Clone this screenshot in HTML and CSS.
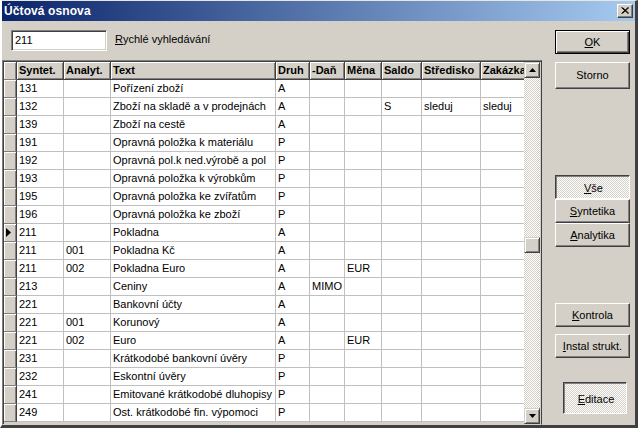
FILE: index.html
```html
<!DOCTYPE html>
<html lang="cs">
<head>
<meta charset="utf-8">
<title>Účtová osnova</title>
<link rel="stylesheet" href="styles.css">
</head>
<body>
<div class="window">
  <div class="titlebar">
    <span class="title">Účtová osnova</span>
    <span class="close"><svg width="8" height="7" viewBox="0 0 8 7"><path d="M0.5 0.5 L7 6.5 M1.5 0.5 L8 6.5 M7 0.5 L0.5 6.5 M8 0.5 L1.5 6.5" stroke="#000" stroke-width="1" fill="none"/></svg></span>
  </div>
  <div class="client">
    <div class="leftcol">
      <div class="search">
        <div class="input">211</div>
        <div class="label"><u>R</u>ychlé vyhledávání</div>
      </div>
      <div class="grid">
        <div class="viewport">
          <table>
            <colgroup>
              <col class="c-ind"><col class="c-syn"><col class="c-ana"><col class="c-txt"><col class="c-dru"><col class="c-dan"><col class="c-men"><col class="c-sal"><col class="c-str"><col class="c-zak">
            </colgroup>
            <thead>
              <tr><th class="ind"></th><th>Syntet.</th><th>Analyt.</th><th>Text</th><th>Druh</th><th>-Daň</th><th>Měna</th><th>Saldo</th><th>Středisko</th><th>Zakázka</th></tr>
            </thead>
            <tbody>
              <tr><td class="ind"></td><td>131</td><td></td><td>Pořízení zboží</td><td>A</td><td></td><td></td><td></td><td></td><td></td></tr>
              <tr><td class="ind"></td><td>132</td><td></td><td>Zboží na skladě a v prodejnách</td><td>A</td><td></td><td></td><td>S</td><td>sleduj</td><td>sleduj</td></tr>
              <tr><td class="ind"></td><td>139</td><td></td><td>Zboží na cestě</td><td>A</td><td></td><td></td><td></td><td></td><td></td></tr>
              <tr><td class="ind"></td><td>191</td><td></td><td>Opravná položka k materiálu</td><td>P</td><td></td><td></td><td></td><td></td><td></td></tr>
              <tr><td class="ind"></td><td>192</td><td></td><td>Opravná pol.k ned.výrobě a pol</td><td>P</td><td></td><td></td><td></td><td></td><td></td></tr>
              <tr><td class="ind"></td><td>193</td><td></td><td>Opravná položka k výrobkům</td><td>P</td><td></td><td></td><td></td><td></td><td></td></tr>
              <tr><td class="ind"></td><td>195</td><td></td><td>Opravná položka ke zvířatům</td><td>P</td><td></td><td></td><td></td><td></td><td></td></tr>
              <tr><td class="ind"></td><td>196</td><td></td><td>Opravná položka ke zboží</td><td>P</td><td></td><td></td><td></td><td></td><td></td></tr>
              <tr><td class="ind cur"><svg width="5" height="9" viewBox="0 0 5 9"><path d="M0 0 L5 4.5 L0 9 Z" fill="#000"/></svg></td><td>211</td><td></td><td>Pokladna</td><td>A</td><td></td><td></td><td></td><td></td><td></td></tr>
              <tr><td class="ind"></td><td>211</td><td>001</td><td>Pokladna Kč</td><td>A</td><td></td><td></td><td></td><td></td><td></td></tr>
              <tr><td class="ind"></td><td>211</td><td>002</td><td>Pokladna Euro</td><td>A</td><td></td><td>EUR</td><td></td><td></td><td></td></tr>
              <tr><td class="ind"></td><td>213</td><td></td><td>Ceniny</td><td>A</td><td>MIMO</td><td></td><td></td><td></td><td></td></tr>
              <tr><td class="ind"></td><td>221</td><td></td><td>Bankovní účty</td><td>A</td><td></td><td></td><td></td><td></td><td></td></tr>
              <tr><td class="ind"></td><td>221</td><td>001</td><td>Korunový</td><td>A</td><td></td><td></td><td></td><td></td><td></td></tr>
              <tr><td class="ind"></td><td>221</td><td>002</td><td>Euro</td><td>A</td><td></td><td>EUR</td><td></td><td></td><td></td></tr>
              <tr><td class="ind"></td><td>231</td><td></td><td>Krátkodobé bankovní úvěry</td><td>P</td><td></td><td></td><td></td><td></td><td></td></tr>
              <tr><td class="ind"></td><td>232</td><td></td><td>Eskontní úvěry</td><td>P</td><td></td><td></td><td></td><td></td><td></td></tr>
              <tr><td class="ind"></td><td>241</td><td></td><td>Emitované krátkodobé dluhopisy</td><td>P</td><td></td><td></td><td></td><td></td><td></td></tr>
              <tr><td class="ind"></td><td>249</td><td></td><td>Ost. krátkodobé fin. výpomoci</td><td>P</td><td></td><td></td><td></td><td></td><td></td></tr>
            </tbody>
          </table>
        </div>
        <div class="vscroll">
          <div class="sbtn"><svg width="7" height="4" viewBox="0 0 7 4"><path d="M3.5 0 L7 4 L0 4 Z" fill="#000"/></svg></div>
          <div class="track">
            <div class="track-top"></div>
            <div class="thumb"></div>
            <div class="track-bot"></div>
          </div>
          <div class="sbtn"><svg width="7" height="4" viewBox="0 0 7 4"><path d="M0 0 L7 0 L3.5 4 Z" fill="#000"/></svg></div>
        </div>
      </div>
    </div>
    <div class="rightcol">
      <div class="btn default b-ok"><u>O</u>K</div>
      <div class="btn b-storno">Storno</div>
      <div class="toggles">
        <div class="btn pressed b-tog"><u>V</u>še</div>
        <div class="btn b-tog"><u>S</u>yntetika</div>
        <div class="btn b-tog"><u>A</u>nalytika</div>
      </div>
      <div class="btn b-kontrola"><u>K</u>ontrola</div>
      <div class="btn b-instal"><u>I</u>nstal strukt.</div>
      <div class="btn pressed b-editace"><u>E</u>ditace</div>
    </div>
  </div>
</div>
</body>
</html>
```

FILE: styles.css
```css
* { box-sizing: border-box; }
html, body { margin: 0; padding: 0; }
body {
  width: 638px;
  height: 428px;
  overflow: hidden;
  background: #d4d0c8;
  font-family: "Liberation Sans", Arial, sans-serif;
  font-size: 11px;
  color: #000;
}
.window {
  width: 638px;
  height: 428px;
  border-style: solid;
  border-width: 1px 3px 3px 2px;
  border-color: #e8e6e0 #404040 #404040 #ffffff;
  display: flex;
  flex-direction: column;
}
.titlebar {
  height: 20px;
  flex: none;
  background: linear-gradient(to right, #0a246a, #a6caf0);
  display: flex;
  align-items: center;
  justify-content: space-between;
  padding: 0 2px 0 2px;
}
.title {
  color: #fff;
  font-weight: bold;
  font-size: 12px;
  letter-spacing: 0.1px;
}
.close {
  width: 16px;
  height: 14px;
  background: #d4d0c8;
  border: 1px solid;
  border-color: #fff #404040 #404040 #fff;
  box-shadow: inset -1px -1px 0 #808080;
  display: flex;
  align-items: center;
  justify-content: center;
  padding-bottom: 1px;
}
.close svg { display: block; }
.client {
  flex: 1;
  display: flex;
  min-height: 0;
}
.leftcol {
  width: 540px;
  display: flex;
  flex-direction: column;
  padding-top: 9px;
}
.search {
  display: flex;
  align-items: flex-start;
  padding-left: 9px;
  height: 21px;
}
.input {
  width: 96px;
  height: 21px;
  background: #fff;
  border: 1px solid;
  border-color: #808080 #fff #fff #808080;
  box-shadow: inset 1px 1px 0 #404040, inset -1px -1px 0 #d4d0c8;
  padding: 3px 0 0 3px;
  line-height: 13px;
}
.label {
  margin-left: 8px;
  padding-top: 3px;
  line-height: 13px;
}
.grid {
  margin-top: 9px;
  flex: 1;
  display: flex;
  border: 1px solid;
  border-color: #808080 #404040 #d4d0c8 #808080;
  box-shadow: inset 1px 1px 0 #404040;
  padding: 1px 1px 0 1px;
  min-height: 0;
}
.viewport {
  width: 520px;
  overflow: hidden;
  background: #d4d0c8;
}
table {
  border-collapse: separate;
  border-spacing: 0;
  table-layout: fixed;
  width: 537px;
}
.c-ind { width: 13px; }
.c-syn { width: 47px; }
.c-ana { width: 47px; }
.c-txt { width: 165px; }
.c-dru { width: 34px; }
.c-dan { width: 35px; }
.c-men { width: 37px; }
.c-sal { width: 40px; }
.c-str { width: 59px; }
.c-zak { width: 60px; }
th, td {
  height: 18px;
  padding: 0 0 0 2px;
  white-space: nowrap;
  overflow: hidden;
  text-align: left;
  line-height: 17px;
  vertical-align: middle;
}
th {
  background: #d4d0c8;
  font-weight: bold;
  border-right: 1px solid #404040;
  border-bottom: 1px solid #404040;
  box-shadow: inset 1px 1px 0 #fff, inset -1px -1px 0 #808080;
  padding-left: 2px;
}
td {
  background: #fff;
  border-right: 1px solid #c0c0c0;
  border-bottom: 1px solid #c0c0c0;
}
.ind, td.ind {
  background: #d4d0c8;
  border-right: 1px solid #404040;
  border-bottom: 1px solid #808080;
  box-shadow: inset 1px 1px 0 #fff, inset -1px 0 0 #808080;
  padding: 0;
}
td.cur svg {
  display: block;
  margin-left: 2px;
}
.vscroll {
  width: 16px;
  display: flex;
  flex-direction: column;
}
.sbtn {
  height: 16px;
  flex: none;
  background: #d4d0c8;
  border: 1px solid;
  border-color: #d4d0c8 #404040 #404040 #d4d0c8;
  box-shadow: inset 1px 1px 0 #fff, inset -1px -1px 0 #808080;
  display: flex;
  align-items: center;
  justify-content: center;
}
.sbtn svg { display: block; }
.track {
  flex: 1;
  display: flex;
  flex-direction: column;
  background: repeating-conic-gradient(#ffffff 0 25%, #d4d0c8 0 50%) 0 0 / 2px 2px;
}
.track-top { height: 159px; }
.thumb {
  height: 16px;
  background: #d4d0c8;
  border: 1px solid;
  border-color: #d4d0c8 #404040 #404040 #d4d0c8;
  box-shadow: inset 1px 1px 0 #fff, inset -1px -1px 0 #808080;
}
.track-bot { flex: 1; }
.rightcol {
  flex: 1;
  display: flex;
  flex-direction: column;
  padding-left: 13px;
  padding-top: 9px;
}
.btn {
  width: 75px;
  height: 24px;
  background: #d4d0c8;
  border: 1px solid;
  border-color: #fff #404040 #404040 #fff;
  box-shadow: inset -1px -1px 0 #808080;
  display: flex;
  align-items: center;
  justify-content: center;
  line-height: 13px;
}
.btn.default {
  border: 1px solid #000;
  box-shadow: inset 1px 1px 0 #fff, inset -1px -1px 0 #404040, inset -2px -2px 0 #808080;
}
.btn.pressed {
  border-color: #404040 #fff #fff #404040;
  box-shadow: inset 1px 1px 0 #808080;
  background: repeating-conic-gradient(#ffffff 0 25%, #d4d0c8 0 50%) 0 0 / 2px 2px;
  padding: 2px 0 0 2px;
}
.b-storno { margin-top: 8px; height: 27px; }
.toggles { margin-top: 86px; display: flex; flex-direction: column; }
.b-kontrola { margin-top: 56px; }
.b-instal { margin-top: 7px; }
.b-editace {
  margin-top: 24px;
  margin-left: 8px;
  width: 64px;
  height: 32px;
}
```
